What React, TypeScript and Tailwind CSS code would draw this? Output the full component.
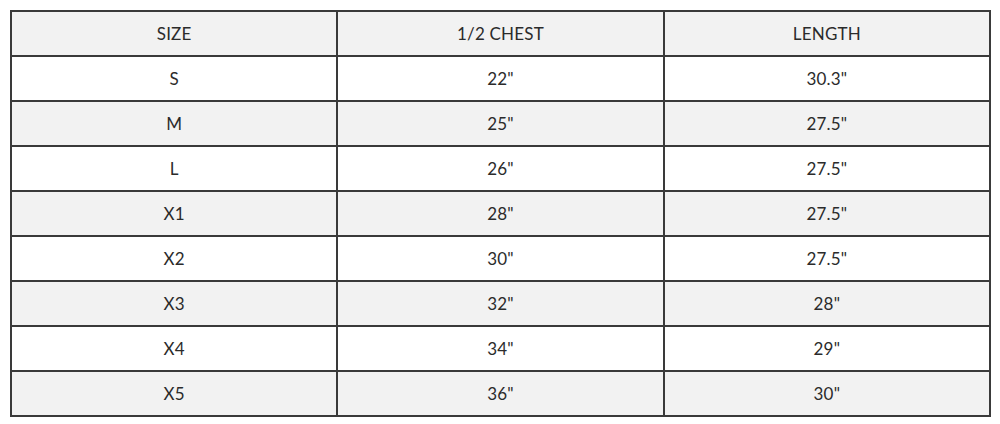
import React from "react";

const rows: [string, string, string][] = [
  ["S", '22"', '30.3"'],
  ["M", '25"', '27.5"'],
  ["L", '26"', '27.5"'],
  ["X1", '28"', '27.5"'],
  ["X2", '30"', '27.5"'],
  ["X3", '32"', '28"'],
  ["X4", '34"', '29"'],
  ["X5", '36"', '30"'],
];

export default function App() {
  return (
    <div className="w-[1000px] h-[424px] bg-white pt-[10px] pl-[10px]" style={{ fontFamily: "Lato, 'Open Sans', sans-serif" }}>
      <table className="w-[981px] border-collapse table-fixed text-[17px] tracking-[0.2px] text-[#2b2b2b]">
        <thead>
          <tr className="h-[45px] bg-[#f2f2f2]">
            <th className="border-2 border-[#3a3a3a] font-normal text-center">SIZE</th>
            <th className="border-2 border-[#3a3a3a] font-normal text-center">1/2 CHEST</th>
            <th className="border-2 border-[#3a3a3a] font-normal text-center">LENGTH</th>
          </tr>
        </thead>
        <tbody>
          {rows.map((r, i) => (
            <tr key={r[0]} className={i % 2 === 0 ? "h-[45px] bg-white" : "h-[45px] bg-[#f2f2f2]"}>
              {r.map((c, j) => (
                <td key={j} className="border-2 border-[#3a3a3a] text-center">{c}</td>
              ))}
            </tr>
          ))}
        </tbody>
      </table>
    </div>
  );
}
